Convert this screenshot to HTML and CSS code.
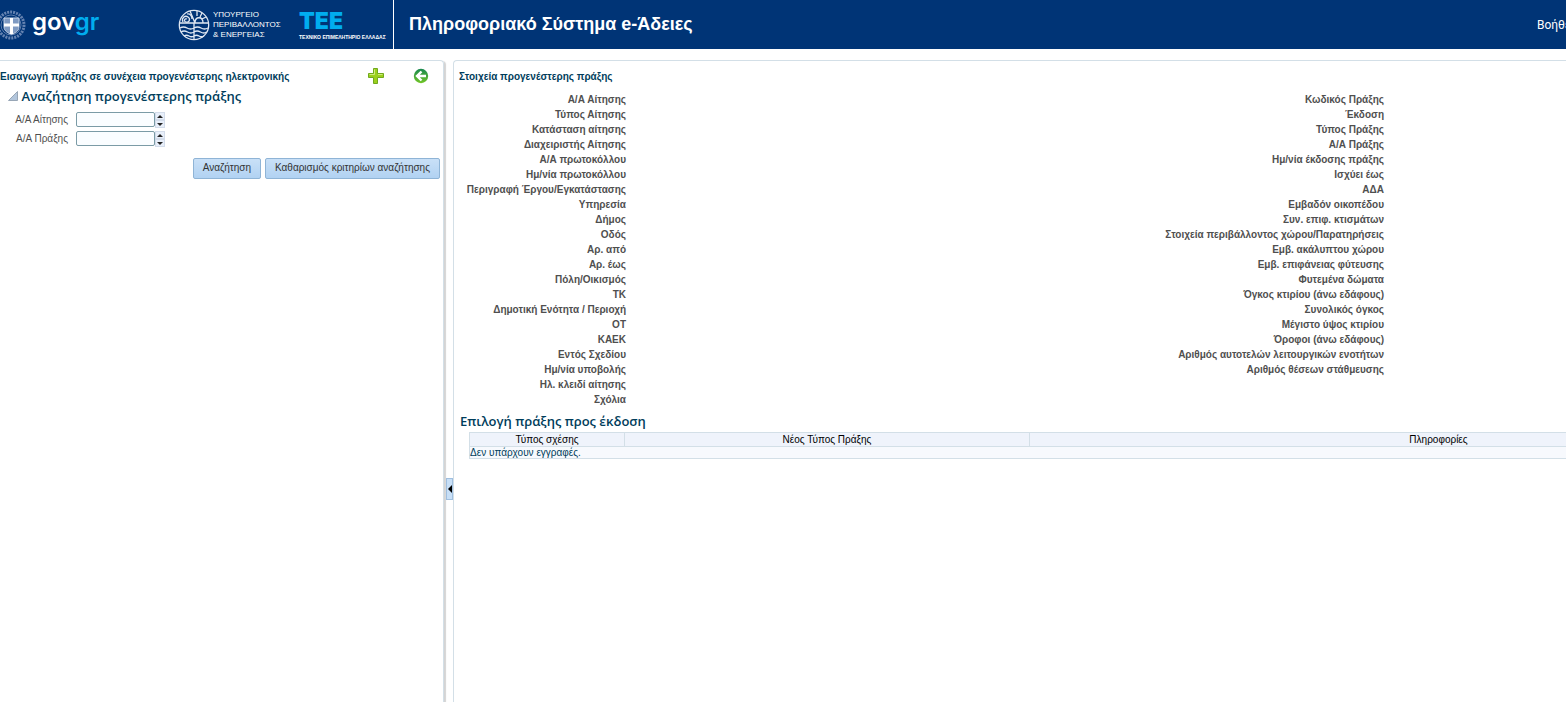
FILE: index.html
```html
<!DOCTYPE html>
<html lang="el">
<head>
    <meta charset="UTF-8">
    <meta name="viewport" content="width=device-width, initial-scale=1.0">
    <title>Πληροφοριακό Σύστημα e-Άδειες</title>
    <link rel="stylesheet" href="styles.css">
</head>
<body>
    <header class="header">
        <div class="logo-gov">
            <svg class="emblem" width="26" height="30" viewBox="0 0 26 30" fill="none">
                <circle cx="11" cy="15" r="13" stroke="#6583b1" stroke-width="3" stroke-dasharray="2 1"/>
                <circle cx="11" cy="15" r="10" stroke="#5f7fae" stroke-width="1"/>
                <path d="M4 8h15v9c0 4-4 6-7.500 7.500C8 23 4 21 4 17z" fill="#7f9ac2" stroke="#c5d2e5"/>
                <path d="M11.500 8v16M4 15h15" stroke="#fff" stroke-width="3"/>
            </svg>
            <span class="gov">gov<span class="gr">gr</span></span>
        </div>
        <div class="logo-ministry">
            <svg width="32" height="32" viewBox="0 0 32 32" fill="none" stroke="#dfe7f2" stroke-width="1.300">
                <circle cx="16" cy="16" r="14.700"/>
                <path d="M1.500 14h29M16 14v16.500M2 19q3.500-2 7 0t7 0 7 0 7 0M3 23q3-2 6.500 0t6.500 0 6.500 0 6 0M6 27q2.500-1.500 5 0t5 0 5 0 5 0"/>
                <path d="M12 2l5 12M19 2v5M24 4l-2 4M28 8l-4 2M17 14c0-7 8-7 8 0"/>
                <path d="M5 13c-2-4 2-7 5-5s1 6-2 5-1-4 1-3M9 5c3-1 5 2 5 5" />
            </svg>
            <span>ΥΠΟΥΡΓΕΙΟ<br>ΠΕΡΙΒΑΛΛΟΝΤΟΣ<br>&amp; ΕΝΕΡΓΕΙΑΣ</span>
        </div>
        <div class="logo-tee">
            <strong>TEE</strong>
            <span>ΤΕΧΝΙΚΟ ΕΠΙΜΕΛΗΤΗΡΙΟ ΕΛΛΑΔΑΣ</span>
        </div>
        <h1>Πληροφοριακό Σύστημα e-Άδειες</h1>
        <a class="help" href="#">Βοήθεια</a>
    </header>

    <div class="layout">
        <section class="panel search-panel">
            <div class="panel-title">
                <h2>Εισαγωγή πράξης σε συνέχεια προγενέστερης ηλεκτρονικής</h2>
                <button class="icon-btn" type="button" aria-label="Προσθήκη">
                    <svg width="16" height="16" viewBox="0 0 16 16">
                        <path d="M5.500.500h4v5h6v4h-6v6h-4v-6h-5v-4h5z" fill="#9bd01c" stroke="#71a91d"/>
                        <path d="M6.500 1.500v5h-5M10 6.500h4.500" fill="none" stroke="#d0ed7c"/>
                    </svg>
                </button>
                <button class="icon-btn" type="button" aria-label="Επιστροφή">
                    <svg width="16" height="16" viewBox="0 0 16 16" fill="none">
                        <defs>
                            <linearGradient id="back" x2="0" y2="1">
                                <stop stop-color="#18884f"/>
                                <stop offset="1" stop-color="#72c626"/>
                            </linearGradient>
                        </defs>
                        <circle cx="8" cy="8" r="7.200" fill="url(#back)"/>
                        <path d="M8.500 3.500L4 8l4.500 4.500M4.500 8H13" stroke="#fff" stroke-width="2.400"/>
                    </svg>
                </button>
            </div>

            <h3 class="section-title">
                <svg width="10" height="10" viewBox="0 0 10 10"><path d="M9.500.500v9h-9z" fill="#b3c6dc" stroke="#98a6b6"/></svg>
                Αναζήτηση προγενέστερης πράξης
            </h3>

            <form class="search-form">
                <div class="form-row">
                    <label for="requestNo">Α/Α Αίτησης</label>
                    <input type="text" id="requestNo">
                    <span class="spin">
                        <button type="button" class="up" aria-label="Αύξηση"></button>
                        <button type="button" class="down" aria-label="Μείωση"></button>
                    </span>
                </div>
                <div class="form-row">
                    <label for="actNo">Α/Α Πράξης</label>
                    <input type="text" id="actNo">
                    <span class="spin">
                        <button type="button" class="up" aria-label="Αύξηση"></button>
                        <button type="button" class="down" aria-label="Μείωση"></button>
                    </span>
                </div>
                <div class="actions">
                    <button type="button" class="btn">Αναζήτηση</button>
                    <button type="button" class="btn">Καθαρισμός κριτηρίων αναζήτησης</button>
                </div>
            </form>
        </section>

        <div class="splitter">
            <button type="button" aria-label="Σύμπτυξη"></button>
        </div>

        <main class="panel details-panel">
            <div class="panel-title">
                <h2>Στοιχεία προγενέστερης πράξης</h2>
            </div>

            <div class="details">
                <ul class="request">
                    <li>Α/Α Αίτησης</li>
                    <li>Τύπος Αίτησης</li>
                    <li>Κατάσταση αίτησης</li>
                    <li>Διαχειριστής Αίτησης</li>
                    <li>Α/Α πρωτοκόλλου</li>
                    <li>Ημ/νία πρωτοκόλλου</li>
                    <li>Περιγραφή Έργου/Εγκατάστασης</li>
                    <li>Υπηρεσία</li>
                    <li>Δήμος</li>
                    <li>Οδός</li>
                    <li>Αρ. από</li>
                    <li>Αρ. έως</li>
                    <li>Πόλη/Οικισμός</li>
                    <li>ΤΚ</li>
                    <li>Δημοτική Ενότητα / Περιοχή</li>
                    <li>ΟΤ</li>
                    <li>ΚΑΕΚ</li>
                    <li>Εντός Σχεδίου</li>
                    <li>Ημ/νία υποβολής</li>
                    <li>Ηλ. κλειδί αίτησης</li>
                    <li>Σχόλια</li>
                </ul>
                <ul class="act">
                    <li>Κωδικός Πράξης</li>
                    <li>Έκδοση</li>
                    <li>Τύπος Πράξης</li>
                    <li>Α/Α Πράξης</li>
                    <li>Ημ/νία έκδοσης πράξης</li>
                    <li>Ισχύει έως</li>
                    <li>ΑΔΑ</li>
                    <li>Εμβαδόν οικοπέδου</li>
                    <li>Συν. επιφ. κτισμάτων</li>
                    <li>Στοιχεία περιβάλλοντος χώρου/Παρατηρήσεις</li>
                    <li>Εμβ. ακάλυπτου χώρου</li>
                    <li>Εμβ. επιφάνειας φύτευσης</li>
                    <li>Φυτεμένα δώματα</li>
                    <li>Όγκος κτιρίου (άνω εδάφους)</li>
                    <li>Συνολικός όγκος</li>
                    <li>Μέγιστο ύψος κτιρίου</li>
                    <li>Όροφοι (άνω εδάφους)</li>
                    <li>Αριθμός αυτοτελών λειτουργικών ενοτήτων</li>
                    <li>Αριθμός θέσεων στάθμευσης</li>
                </ul>
            </div>

            <h3 class="section-title">Επιλογή πράξης προς έκδοση</h3>
            <table class="acts">
                <colgroup>
                    <col class="col-relation">
                    <col class="col-type">
                    <col class="col-info">
                </colgroup>
                <thead>
                    <tr>
                        <th>Τύπος σχέσης</th>
                        <th>Νέος Τύπος Πράξης</th>
                        <th>Πληροφορίες</th>
                    </tr>
                </thead>
                <tbody>
                    <tr>
                        <td colspan="3">Δεν υπάρχουν εγγραφές.</td>
                    </tr>
                </tbody>
            </table>
        </main>
    </div>
</body>
</html>
```
FILE: styles.css
```css
:root {
    --navy: #003476;
    --cyan: #00adef;
    --heading: #003d5b;
    --line: #d3dfe7;
}
* {
    box-sizing: border-box;
}
body {
    margin: 0;
    min-height: 100vh;
    display: flex;
    flex-direction: column;
    overflow: hidden;
    background: white;
    font-family: "Liberation Sans", Arial, sans-serif;
    font-size: 10px;
    color: #4f4f4f;
}
h1, h2, h3, ul {
    margin: 0;
    padding: 0;
}
button {
    padding: 0;
    font-family: inherit;
    cursor: pointer;
}

/* header */
.header {
    display: flex;
    align-items: center;
    height: 49px;
    background: var(--navy);
    color: white;
    white-space: nowrap;
}
.logo-gov {
    display: flex;
    align-items: center;
    width: 178px;
}
.emblem {
    margin-right: 6px;
}
.gov {
    font-family: Inter, sans-serif;
    font-size: 24px;
    font-weight: 600;
    line-height: 32px;
    margin-bottom: 6px;
}
.gr {
    color: var(--cyan);
}
.logo-ministry {
    display: flex;
    align-items: center;
    gap: 3px;
    width: 121px;
    font-size: 8px;
    line-height: 10px;
}
.logo-tee {
    display: flex;
    flex-direction: column;
    justify-content: center;
    width: 95px;
    height: 49px;
    border-right: 1px solid white;
}
.logo-tee strong {
    font-family: Inter, sans-serif;
    font-size: 23px;
    font-weight: 900;
    line-height: 24px;
    color: var(--cyan);
}
.logo-tee span {
    font-size: 5px;
    font-weight: bold;
    line-height: 8px;
}
.header h1 {
    flex: 1;
    padding-left: 15px;
    font-size: 18px;
}
.help {
    flex: 0 0 29px;
    min-width: 0;
    overflow: hidden;
    color: white;
    font-family: Roboto, sans-serif;
    font-size: 12px;
    text-decoration: none;
}

/* panels */
.layout {
    flex: 1;
    display: flex;
    padding-top: 11px;
}
.panel {
    border-top: 1px solid var(--line);
}
.search-panel {
    flex: 0 0 444px;
    border-right: 1px solid var(--line);
    border-top-right-radius: 4px;
    box-shadow: 2px 1px 1px #d4d4d4;
}
.details-panel {
    flex: 1;
    min-width: 0;
    overflow: hidden;
    border-left: 1px solid var(--line);
    border-top-left-radius: 4px;
}
.panel-title {
    display: flex;
    align-items: center;
    height: 28px;
    padding: 2px 14px 0 0;
}
.details-panel .panel-title {
    padding-left: 5px;
}
.panel-title h2 {
    flex: 1;
    font-size: 10px;
    color: var(--heading);
    white-space: nowrap;
}
.icon-btn {
    display: flex;
    border: none;
    background: none;
}
.icon-btn + .icon-btn {
    margin-left: 29px;
}
.section-title {
    font-family: "Open Sans", sans-serif;
    font-size: 13px;
    font-weight: 600;
    line-height: 14px;
    color: var(--heading);
}
.search-panel .section-title {
    padding-left: 8px;
}

/* search form */
.search-form {
    padding-top: 9px;
}
.form-row {
    display: flex;
    height: 16px;
    margin-bottom: 3px;
}
.form-row label {
    width: 76px;
    padding-right: 8px;
    line-height: 16px;
    text-align: right;
}
.form-row input {
    width: 79px;
    height: 15px;
    padding: 0 2px;
    border: 1px solid #7b9ba6;
    border-radius: 2px;
    background: #fafdff;
    font-size: 10px;
}
.spin {
    display: flex;
    flex-direction: column;
    width: 10px;
}
.spin button {
    flex: 1;
    display: flex;
    align-items: center;
    justify-content: center;
    border: 1px solid #d3dcea;
    background: #e8effa;
}
.spin button::before {
    content: "";
    border: 3px solid transparent;
}
.spin .up::before {
    border-top: none;
    border-bottom-color: #222;
}
.spin .down::before {
    border-bottom: none;
    border-top-color: #222;
}
.actions {
    display: flex;
    justify-content: flex-end;
    gap: 4px;
    padding: 8px 3px 0 0;
}
.btn {
    height: 21px;
    padding: 0 9px 2px;
    border: 1px solid #8fb4d6;
    border-radius: 2px;
    background: linear-gradient(#c9e0f7, #b1d2f2);
    font-size: 10px;
    color: #333;
}

.splitter {
    flex: 0 0 9px;
    display: flex;
    align-items: center;
    justify-content: flex-end;
    padding-top: 215px;
}
.splitter button {
    display: flex;
    align-items: center;
    justify-content: center;
    width: 7px;
    height: 22px;
    border: 1px solid #a0bfdf;
    background: #c7dff7;
}
.splitter button::before {
    content: "";
    border: 4px solid transparent;
    border-left: none;
    border-right-color: black;
}

/* details */
.details {
    display: flex;
    padding: 3px 0 7px;
    font-weight: bold;
    text-align: right;
    white-space: nowrap;
}
.details ul {
    list-style: none;
    line-height: 15px;
}
.request {
    flex: 0 0 172px;
}
.act {
    flex: 0 0 758px;
}
.details-panel .section-title {
    padding-left: 6px;
}

/* results table, wider than the panel */
.acts {
    width: 1379px;
    margin: 4px 0 0 15px;
    border-collapse: collapse;
    table-layout: fixed;
    line-height: 11px;
}
.col-relation {
    width: 155px;
}
.col-type {
    width: 405px;
}
.acts th, .acts td {
    padding: 0;
    border: 1px solid var(--line);
}
.acts th {
    height: 14px;
    background: #eff3fb;
    font-weight: normal;
    color: black;
}
.acts td {
    background: #f7f9fd;
    color: var(--heading);
}
```
